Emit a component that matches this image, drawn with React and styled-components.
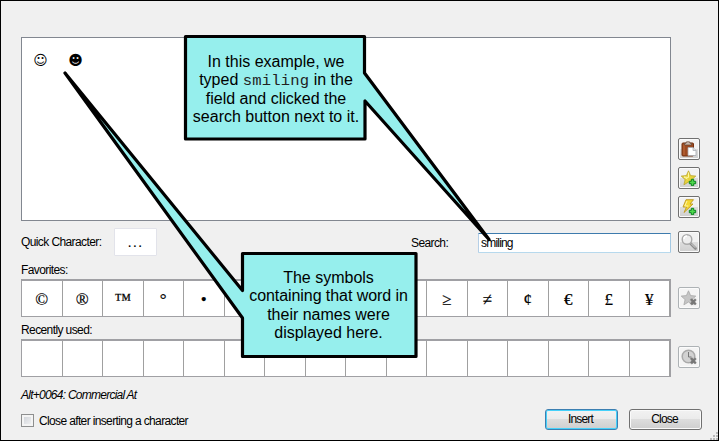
import React from "react";
import styled, { createGlobalStyle } from "styled-components";

const GlobalStyle = createGlobalStyle`
  * { box-sizing: border-box; }
  body { margin: 0; background: #f0f0f0; }
`;

const Dialog = styled.main`
  position: relative;
  width: 719px;
  height: 441px;
  padding: 36px 0 0 20px;
  border: 1px solid #000;
  background: #f0f0f0;
  color: #000;
  overflow: hidden;
  font: 12px/14px "Liberation Sans", Arial, sans-serif;
`;

const Row = styled.section`
  display: grid;
  grid-template-columns: 650px 22px;
  grid-template-rows: ${(p) => p.$height}px;
  column-gap: 7px;
  height: ${(p) => p.$height}px;
  margin-top: ${(p) => p.$top || 0}px;
`;

const SymbolPanel = styled.div`
  display: flex;
  gap: 18px;
  padding: 12px 10px;
  border: 1px solid #828790;
  background: #fff;
`;

const Symbol = styled.span`
  width: 17px;
  text-align: center;
  font: ${(p) => p.$size}px/20px "DejaVu Sans", sans-serif;
`;

const ButtonStack = styled.div`
  display: flex;
  flex-direction: column;
  gap: 7px;
  padding-top: ${(p) => p.$top}px;
`;

const IconButton = styled.button`
  display: grid;
  place-items: center;
  width: 22px;
  height: 22px;
  padding: 0;
  border: 1px solid ${(p) => (p.disabled ? "#adb2b5" : "#707070")};
  border-radius: 2px;
  background: ${(p) =>
    p.disabled ? "#f4f4f4" : "linear-gradient(#f2f2f2 0 48%, #dddddd 52%, #cfcfcf)"};
  box-shadow: inset 0 0 0 1px #fbfbfb;
  svg { display: block; }
`;

const SearchRow = styled.div`
  display: flex;
  align-items: flex-start;
`;

const Label = styled.label`
  display: block;
  white-space: nowrap;
  width: ${(p) => (p.$width ? p.$width + "px" : "auto")};
  padding-top: ${(p) => p.$top || 0}px;
  letter-spacing: ${(p) => p.$spacing || -0.6}px;
  font-style: ${(p) => (p.$italic ? "italic" : "normal")};
`;

const QuickField = styled.div`
  width: 43px;
  height: 28px;
  margin-right: 254px;
  border: 1px solid #e2e3ea;
  border-radius: 1px;
  background: #fff;
  text-align: center;
  font: 15px/26px "Liberation Serif", serif;
  letter-spacing: 1.5px;
`;

const SearchInput = styled.input`
  width: 193px;
  height: 20px;
  margin-top: 5px;
  padding: 0 0 0 2px;
  border: 1px solid;
  border-color: #3d7bad #a4c9e3 #b7d9ed #b5cfe7;
  border-radius: 1px;
  background: #fff;
  color: #000;
  font: 12px/14px "Liberation Sans", Arial, sans-serif;
  letter-spacing: -0.8px;
`;

const CharGrid = styled.div`
  display: grid;
  grid-template-columns: repeat(16, 1fr);
  border: 1px solid #a0a0a4;
  border-width: 2px 1px 1px 1px;
  background: #fff;
`;

const Cell = styled.div`
  border-right: 1px solid #a0a0a0;
  text-align: center;
  font: 17px/38px "Liberation Serif", serif;
  height: 35px;
  -webkit-text-stroke: 0.2px #000;
`;

const Footer = styled.footer`
  display: flex;
  align-items: flex-start;
  width: 681px;
  height: 21px;
`;

const CheckBox = styled.span`
  width: 13px;
  height: 13px;
  margin: 5px 5px 0 0;
  border: 1px solid #8e8f8f;
  background: linear-gradient(135deg, #cbcfd5, #f6f6f6);
  box-shadow: inset 0 0 0 2px #f4f4f4;
`;

const PushButton = styled.button`
  width: 73px;
  height: 21px;
  margin-left: ${(p) => (p.$primary ? "auto" : "11px")};
  padding: 0 2px 0 0;
  border: 1px solid ${(p) => (p.$primary ? "#3c7fb1" : "#707070")};
  border-radius: 3px;
  background: linear-gradient(#f2f2f2, #ebebeb 49%, #dddddd 50%, #cfcfcf);
  box-shadow: inset 0 0 0 1px ${(p) => (p.$primary ? "#46d1fa" : "#fafafa")};
  color: #000;
  font: 12px/19px "Liberation Sans", Arial, sans-serif;
  letter-spacing: -0.8px;
`;

const Overlay = styled.svg`
  position: absolute;
  left: -1px;
  top: -1px;
  pointer-events: none;
`;

const CalloutText = styled.div`
  position: absolute;
  left: ${(p) => p.$x}px;
  top: ${(p) => p.$y}px;
  width: ${(p) => p.$w}px;
  text-align: center;
  font: 16px/18.3px "Liberation Sans", Arial, sans-serif;
  white-space: nowrap;
`;

const Line = styled.div`
  height: 18.3px;
  letter-spacing: ${(p) => p.$spacing || 0}px;
`;

const Code = styled.code`
  font: 15.5px/18px "Liberation Mono", monospace;
  letter-spacing: 0.2px;
  color: #222;
`;

const Grip = styled.svg`
  position: absolute;
  right: 0;
  bottom: 0;
`;

const ClipboardIcon = () => (
  <svg width="16" height="16" viewBox="0 0 16 16">
    <rect x="1" y="2" width="11.500" height="13" rx="1" fill="#9c4a21" stroke="#74300f" />
    <path d="M2.500 3.500h1V14h-1z" fill="#bd6b3d" />
    <path d="M3.500 4V2.300H5L5.500.8h3L9 2.300h1.500V4z" fill="#c9b9ae" stroke="#60422f" strokeWidth=".7" />
    <path d="M7 6.500h5l3 3v5H7z" fill="#fff" stroke="#a6aab0" strokeWidth=".8" />
    <path d="M12 6.500v3h3" fill="#ddd" stroke="#a6aab0" strokeWidth=".7" />
  </svg>
);

const star = "M7.500.8l2.100 4.800 5.200.5-3.900 3.500 1.200 5.200-4.600-2.800-4.600 2.800 1.200-5.200L.2 6.100l5.200-.5z";

const Plus = () => (
  <path d="M10.300 9.300h2.400v2h2v2.400h-2v2h-2.400v-2h-2v-2.400h2z" fill="#4fd84d" stroke="#0a8420" strokeWidth="1" />
);

const StarIcon = () => (
  <svg width="16" height="16" viewBox="0 0 16 16">
    <path d={star} fill="#e6d33b" stroke="#b39c22" strokeWidth=".7" />
    <path d="M7.500 2.500v5L3 7l3.500 2" stroke="#fff6a1" fill="none" />
    <Plus />
  </svg>
);

const BoltIcon = () => (
  <svg width="16" height="16" viewBox="0 0 16 16">
    <path d="M5 .7h7.500L9 5h3L3 13.500l2.500-5.500H2z" fill="#f5d832" stroke="#bd9720" strokeWidth=".9" />
    <path d="M6 2L3.800 7h3.500" stroke="#fff6a9" fill="none" />
    <Plus />
  </svg>
);

const SearchIcon = () => (
  <svg width="18" height="18" viewBox="0 0 18 18">
    <path d="M10.500 10.500l5 5" stroke="#8c8c8c" strokeWidth="2.600" strokeLinecap="round" />
    <path d="M11 10.500l4.300 4.300" stroke="#d8d8d8" strokeWidth="1" />
    <circle cx="7" cy="6.500" r="4.800" fill="#eee" stroke="#aaa" strokeWidth="1.400" />
    <path d="M4 6a3 3 0 0 1 3-3" stroke="#fff" strokeWidth="1.500" fill="none" />
  </svg>
);

const Remove = () => (
  <path d="M9 9.500l2-1 1.500 1.500L14 8.500l1.500 1.500-1.500 1.700 1.500 2-1.500 1.500-1.500-1.500-1.500 1.500-2-1.500 1.500-2z" fill="#777" stroke="#999" strokeWidth=".6" strokeDasharray="1 1" />
);

const StarOffIcon = () => (
  <svg width="16" height="16" viewBox="0 0 16 16">
    <path d={star} fill="#c5c5c5" stroke="#a7a7a7" strokeWidth=".8" />
    <Remove />
  </svg>
);

const ClockIcon = () => (
  <svg width="16" height="16" viewBox="0 0 16 16">
    <circle cx="7.500" cy="7.500" r="6.300" fill="#d2d2d2" stroke="#aaa" strokeWidth="1.500" />
    <path d="M7.500 3v5h3" stroke="#777" fill="none" />
    <Remove />
  </svg>
);

const favorites = ["©", "®", "™", "°", "•", "", "", "", "", "", "≥", "≠", "¢", "€", "£", "¥"];

const Characters = ({ items }) => (
  <CharGrid>
    {items.map((char, index) => <Cell key={index}>{char}</Cell>)}
  </CharGrid>
);

export default function App() {
  return (
    <>
      <GlobalStyle />
      <Dialog>
        <Row $height={184}>
          <SymbolPanel>
            <Symbol $size={14}>☺</Symbol>
            <Symbol $size={14}>☻</Symbol>
          </SymbolPanel>
          <ButtonStack $top={101}>
            <IconButton aria-label="Paste"><ClipboardIcon /></IconButton>
            <IconButton aria-label="Add to favorites"><StarIcon /></IconButton>
            <IconButton aria-label="Add to quick characters"><BoltIcon /></IconButton>
          </ButtonStack>
        </Row>
        <Row $height={28} $top={7}>
          <SearchRow>
            <Label $width={93} $top={7}>Quick Character:</Label>
            <QuickField>...</QuickField>
            <Label $width={67} $top={8}>Search:</Label>
            <SearchInput defaultValue="smiling" />
          </SearchRow>
          <ButtonStack $top={3}>
            <IconButton aria-label="Search"><SearchIcon /></IconButton>
          </ButtonStack>
        </Row>
        <Row $height={23}><Label $top={7}>Favorites:</Label></Row>
        <Row $height={38}>
          <Characters items={favorites} />
          <ButtonStack $top={8}>
            <IconButton disabled aria-label="Remove favorite"><StarOffIcon /></IconButton>
          </ButtonStack>
        </Row>
        <Row $height={22}><Label $top={6}>Recently used:</Label></Row>
        <Row $height={38}>
          <Characters items={Array(16).fill("")} />
          <ButtonStack $top={7}>
            <IconButton disabled aria-label="Clear recent"><ClockIcon /></IconButton>
          </ButtonStack>
        </Row>
        <Row $height={32}><Label $italic $top={11} $spacing={-0.75}>Alt+0064: Commercial At</Label></Row>
        <Footer>
          <CheckBox />
          <Label $top={5} $spacing={-0.64}>Close after inserting a character</Label>
          <PushButton $primary>Insert</PushButton>
          <PushButton>Close</PushButton>
        </Footer>
        <Overlay width="719" height="441" viewBox="0 0 719 441">
          <g fill="#96efed" stroke="#000" strokeWidth="3.200" strokeLinejoin="round">
            <path d="M185.500 36.500H364.500V73L489 239.500L365 101V139H185.500Z" />
            <path d="M242.500 253.500H416V356.500H242.500V318L65 73L242.500 290.500Z" />
          </g>
        </Overlay>
        <CalloutText $x={185} $y={52} $w={180}>
          <Line>In this example, we</Line>
          <Line>typed <Code>smiling</Code> in the</Line>
          <Line>field and clicked the</Line>
          <Line>search button next to it.</Line>
        </CalloutText>
        <CalloutText $x={240} $y={268} $w={175}>
          <Line>The symbols</Line>
          <Line $spacing={-0.07}>containing that word in</Line>
          <Line>their names were</Line>
          <Line>displayed here.</Line>
        </CalloutText>
        <Grip width="9" height="9" viewBox="0 0 9 9">
          <path d="M7 1h2v2H7zM4 4h2v2H4zM7 4h2v2H7zM1 7h2v2H1zM4 7h2v2H4zM7 7h2v2H7z" fill="#b9b9b9" />
        </Grip>
      </Dialog>
    </>
  );
}
